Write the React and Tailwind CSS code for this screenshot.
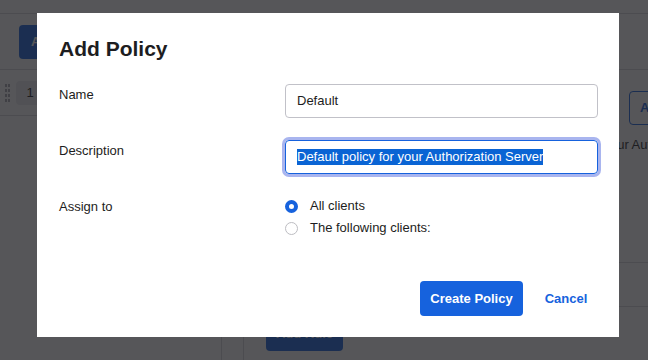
import { useState } from 'react'

function Radio({ checked, label }) {
  return (
    <label className="flex h-[18px] items-center">
      {checked ? (
        <span className="h-[13px] w-[13px] rounded-full border-[4px] border-[#1662dd] bg-white" />
      ) : (
        <span className="h-[13px] w-[13px] rounded-full border border-[#bdbdc2] bg-white" />
      )}
      <span className="ml-[12px]">{label}</span>
    </label>
  )
}

export default function App() {
  const [assign] = useState('all')

  return (
    <div className="relative h-[360px] w-[648px] overflow-hidden bg-white font-['Liberation_Sans',Arial,sans-serif] text-[13px] leading-[18px] text-[#1d1d21]">
      {/* page behind the dialog */}
      <div className="h-[14px] border-b border-[#d7d7dc]" />
      <div className="flex h-[56px] items-center border-b border-[#d7d7dc] px-[19px]">
        <button className="h-[34px] rounded-[4px] bg-[#1662dd] px-[12px] font-bold text-white">
          Add Authorization Server
        </button>
      </div>
      <div className="flex h-[290px]">
        <div className="w-[222px] shrink-0 border-r border-[#d7d7dc]">
          <div className="flex h-[46px] items-center border-b border-[#d7d7dc] pl-[5px]">
            <div className="grid grid-cols-2 gap-x-[1px] gap-y-[2px]">
              {Array.from({ length: 8 }).map((_, i) => (
                <span key={i} className="h-[3px] w-[2px] bg-[#a9a9b0]" />
              ))}
            </div>
            <span className="ml-[6px] flex h-[24px] w-[28px] items-center justify-center rounded-[4px] bg-[#ebebed]">1</span>
            <span className="ml-[8px]">Default Policy</span>
          </div>
        </div>
        <div className="w-[22px] shrink-0 border-r border-[#d7d7dc]" />
        <div className="min-w-0 flex-1 overflow-hidden">
          <div className="flex pl-[385px] pt-[21px]">
            <button className="h-[34px] w-[60px] shrink-0 rounded-[4px] border border-[#1662dd] px-[10px] text-left font-bold text-[#1662dd]">
              Add
            </button>
          </div>
          <div className="mt-[11px] whitespace-nowrap pl-[259px]">Default policy for your Authorization Server</div>
          <div className="mt-[108px] h-[45px] border-y border-[#d7d7dc]" />
          <div className="pl-[22px] pt-[10px]">
            <button className="h-[34px] w-[77px] rounded-[4px] bg-[#1662dd] font-bold text-white">Add Rule</button>
          </div>
        </div>
      </div>

      {/* overlay */}
      <div className="absolute inset-0 bg-[#1d1d21]/75" />

      {/* dialog */}
      <div className="absolute left-[37px] top-[13px] flex h-[324px] w-[582px] flex-col bg-white pl-[22px] pr-[21px]">
        <h2 className="pt-[24px] text-[21px] font-bold leading-[24px]">Add Policy</h2>

        <div className="mt-[23px] grid grid-cols-[226px_1fr]">
          <div className="pt-[2px]">Name</div>
          <div className="flex h-[34px] items-center rounded-[4px] border border-[#c1c1c8] px-[11px]">Default</div>
        </div>

        <div className="mt-[22px] grid grid-cols-[226px_1fr]">
          <div className="pt-[2px]">Description</div>
          <div className="flex h-[34px] items-center rounded-[4px] border border-[#1662dd] px-[11px] ring-[3px] ring-[#a9b5ef]">
            <span className="bg-[#0a64d4] leading-[16px] text-white">Default policy for your Authorization Server</span>
          </div>
        </div>

        <div className="mt-[23px] grid grid-cols-[226px_1fr]">
          <div className="pt-[1px]">Assign to</div>
          <div className="flex flex-col gap-[4px]">
            <Radio checked={assign === 'all'} label="All clients" />
            <Radio checked={assign === 'some'} label="The following clients:" />
          </div>
        </div>

        <div className="mt-[44px] flex justify-end">
          <button className="h-[35px] w-[103px] rounded-[4px] bg-[#1662dd] font-bold text-white">Create Policy</button>
          <button className="ml-[11px] h-[35px] w-[64px] font-bold text-[#1662dd]">Cancel</button>
        </div>
      </div>
    </div>
  )
}
